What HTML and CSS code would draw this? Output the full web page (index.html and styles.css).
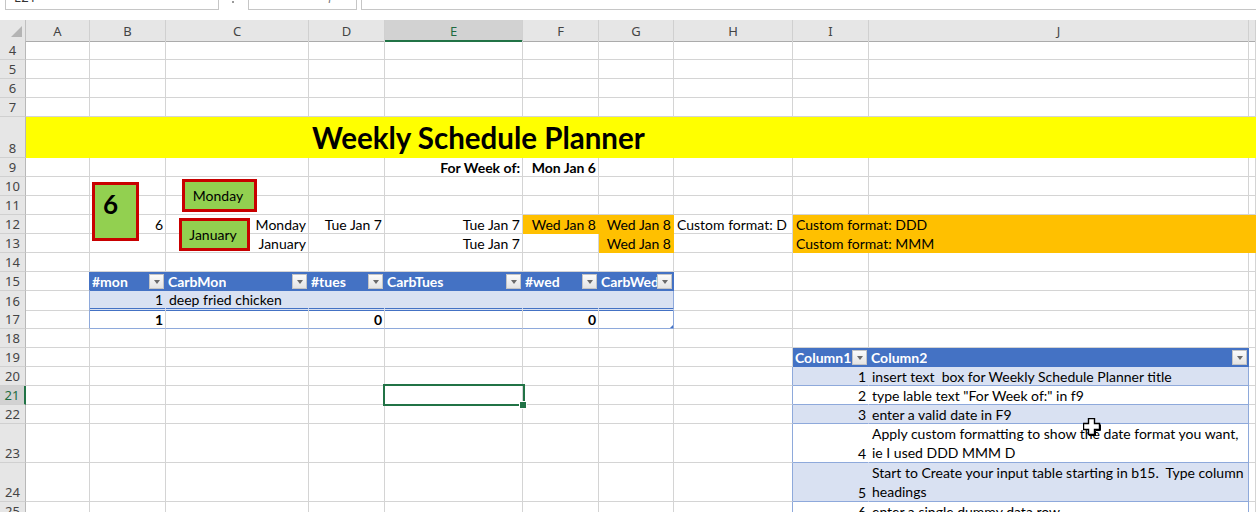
FILE: index.html
```html
<!DOCTYPE html>
<html>
<head>
<meta charset="utf-8">
<title>Weekly Schedule Planner</title>
<link rel="stylesheet" href="styles.css">
</head>
<body>
<div class="page">
  <div class="topbar">
    <div class="namebox">E21</div>
    <div class="dots"></div>
    <div class="fbtns"><span>✕</span><span>✓</span><span class="fx">fx</span></div>
    <div class="finput"></div>
  </div>

  <div class="sheet">
    <div class="row hdr">
      <div class="corner"><svg width="26" height="21" viewBox="0 0 26 21"><polygon points="22,6 22,17 11,17" fill="#b4b4b4"/></svg></div>
      <div class="ch">A</div><div class="ch">B</div><div class="ch">C</div><div class="ch">D</div><div class="ch chsel">E</div><div class="ch">F</div><div class="ch">G</div><div class="ch">H</div><div class="ch">I</div><div class="ch">J</div><div class="ch"></div>
    </div>

    <div class="row"><div class="rh">4</div><div class="c"></div><div class="c"></div><div class="c"></div><div class="c"></div><div class="c"></div><div class="c"></div><div class="c"></div><div class="c"></div><div class="c"></div><div class="c"></div><div class="c"></div></div>
    <div class="row"><div class="rh">5</div><div class="c"></div><div class="c"></div><div class="c"></div><div class="c"></div><div class="c"></div><div class="c"></div><div class="c"></div><div class="c"></div><div class="c"></div><div class="c"></div><div class="c"></div></div>
    <div class="row"><div class="rh">6</div><div class="c"></div><div class="c"></div><div class="c"></div><div class="c"></div><div class="c"></div><div class="c"></div><div class="c"></div><div class="c"></div><div class="c"></div><div class="c"></div><div class="c"></div></div>
    <div class="row"><div class="rh">7</div><div class="c"></div><div class="c"></div><div class="c"></div><div class="c"></div><div class="c"></div><div class="c"></div><div class="c"></div><div class="c"></div><div class="c"></div><div class="c"></div><div class="c"></div></div>

    <div class="row r8"><div class="rh">8</div><div class="c title">Weekly Schedule Planner</div></div>

    <div class="row"><div class="rh">9</div><div class="c"></div><div class="c"></div><div class="c"></div><div class="c"></div><div class="c r b">For Week of:</div><div class="c r b">Mon Jan 6</div><div class="c"></div><div class="c"></div><div class="c"></div><div class="c"></div><div class="c"></div></div>
    <div class="row"><div class="rh">10</div><div class="c"></div><div class="c"></div><div class="c"></div><div class="c"></div><div class="c"></div><div class="c"></div><div class="c"></div><div class="c"></div><div class="c"></div><div class="c"></div><div class="c"></div></div>
    <div class="row"><div class="rh">11</div><div class="c"></div><div class="c"></div><div class="c"></div><div class="c"></div><div class="c"></div><div class="c"></div><div class="c"></div><div class="c"></div><div class="c"></div><div class="c"></div><div class="c"></div></div>

    <div class="row"><div class="rh">12</div><div class="c"></div><div class="c r">6</div><div class="c r">Monday</div><div class="c r">Tue Jan 7</div><div class="c r">Tue Jan 7</div><div class="c r o">Wed Jan 8</div><div class="c r o">Wed Jan 8</div><div class="c">Custom format: D</div><div class="c o span2">Custom format: DDD</div><div class="c o"></div></div>
    <div class="row"><div class="rh">13</div><div class="c"></div><div class="c"></div><div class="c r">January</div><div class="c"></div><div class="c r">Tue Jan 7</div><div class="c"></div><div class="c r o">Wed Jan 8</div><div class="c"></div><div class="c o span2">Custom format: MMM</div><div class="c o"></div></div>
    <div class="row"><div class="rh">14</div><div class="c"></div><div class="c"></div><div class="c"></div><div class="c"></div><div class="c"></div><div class="c"></div><div class="c"></div><div class="c"></div><div class="c"></div><div class="c"></div><div class="c"></div></div>

    <div class="row"><div class="rh">15</div><div class="c tleft-h"></div>
      <div class="c th"><span class="tt">#mon</span><span class="dd"></span></div>
      <div class="c th"><span class="tt">CarbMon</span><span class="dd"></span></div>
      <div class="c th"><span class="tt">#tues</span><span class="dd"></span></div>
      <div class="c th"><span class="tt">CarbTues</span><span class="dd"></span></div>
      <div class="c th"><span class="tt">#wed</span><span class="dd"></span></div>
      <div class="c th"><span class="tt">CarbWed</span><span class="dd"></span></div>
      <div class="c"></div><div class="c"></div><div class="c"></div><div class="c"></div></div>

    <div class="row"><div class="rh">16</div><div class="c tleft"></div><div class="c band r">1</div><div class="c band">deep fried chicken</div><div class="c band"></div><div class="c band"></div><div class="c band"></div><div class="c band tlast"></div><div class="c"></div><div class="c"></div><div class="c"></div><div class="c"></div></div>

    <div class="row"><div class="rh">17</div><div class="c tleft"></div><div class="c tot r b">1</div><div class="c tot"></div><div class="c tot r b">0</div><div class="c tot"></div><div class="c tot r b">0</div><div class="c tot tlast grip"><span class="gripmark"></span></div><div class="c"></div><div class="c"></div><div class="c"></div><div class="c"></div></div>

    <div class="row"><div class="rh">18</div><div class="c"></div><div class="c"></div><div class="c"></div><div class="c"></div><div class="c"></div><div class="c"></div><div class="c"></div><div class="c"></div><div class="c"></div><div class="c"></div><div class="c"></div></div>

    <div class="row"><div class="rh">19</div><div class="c"></div><div class="c"></div><div class="c"></div><div class="c"></div><div class="c"></div><div class="c"></div><div class="c"></div><div class="c"></div>
      <div class="c th"><span class="tt">Column1</span><span class="dd"></span></div>
      <div class="c th"><span class="tt">Column2</span><span class="dd"></span></div>
      <div class="c"></div></div>

    <div class="row"><div class="rh">20</div><div class="c"></div><div class="c"></div><div class="c"></div><div class="c"></div><div class="c"></div><div class="c"></div><div class="c"></div><div class="c tleft"></div><div class="c n1 band r">1</div><div class="c n2 band pre">insert text  box for Weekly Schedule Planner title</div><div class="c"></div></div>
    <div class="row"><div class="rh rhsel">21</div><div class="c"></div><div class="c"></div><div class="c"></div><div class="c"></div><div class="c sel"><span class="selbox"></span><span class="handle"></span></div><div class="c"></div><div class="c"></div><div class="c tleft"></div><div class="c n1 r">2</div><div class="c n2">type lable text "For Week of:" in f9</div><div class="c"></div></div>
    <div class="row"><div class="rh">22</div><div class="c"></div><div class="c"></div><div class="c"></div><div class="c"></div><div class="c"></div><div class="c"></div><div class="c"></div><div class="c tleft"></div><div class="c n1 band r">3</div><div class="c n2 band">enter a valid date in F9</div><div class="c"></div></div>
    <div class="row h39"><div class="rh">23</div><div class="c"></div><div class="c"></div><div class="c"></div><div class="c"></div><div class="c"></div><div class="c"></div><div class="c"></div><div class="c tleft"></div><div class="c n1 r">4</div><div class="c n2 wrap"><span>Apply custom formatting to show the date format you want,<br>ie I used DDD MMM D</span></div><div class="c"></div></div>
    <div class="row h39"><div class="rh">24</div><div class="c"></div><div class="c"></div><div class="c"></div><div class="c"></div><div class="c"></div><div class="c"></div><div class="c"></div><div class="c tleft"></div><div class="c n1 band r">5</div><div class="c n2 band wrap"><span class="pre">Start to Create your input table starting in b15.  Type column<br>headings</span></div><div class="c"></div></div>
    <div class="row"><div class="rh">25</div><div class="c"></div><div class="c"></div><div class="c"></div><div class="c"></div><div class="c"></div><div class="c"></div><div class="c"></div><div class="c tleft"></div><div class="c n1 r">6</div><div class="c n2">enter a single dummy data row</div><div class="c"></div></div>
  </div>

  <div class="tbox tb6">6</div>
  <div class="tbox tbmon">Monday</div>
  <div class="tbox tbjan">January</div>

  <svg class="cursor" width="18" height="18" viewBox="0 0 18 18"><polygon points="5.5,0.5 11.5,0.5 11.5,5.5 16.5,5.5 16.5,11.5 11.5,11.5 11.5,16.5 5.5,16.5 5.5,11.5 0.5,11.5 0.5,5.5 5.5,5.5" fill="#fff" stroke="#000" stroke-width="1.4"/><polyline points="12.5,12.5 12.5,17.5 6,17.5" fill="none" stroke="#000" stroke-width="1"/><polyline points="12.5,12.5 17.5,12.5 17.5,6.5" fill="none" stroke="#000" stroke-width="1"/></svg>
</div>
</body>
</html>
```

FILE: styles.css
```css
body {
  margin: 0;
  background: #fff;
  font-family: Lato, "Liberation Sans", sans-serif;
}

.page {
  position: relative;
  width: 1256px;
  height: 512px;
  overflow: hidden;
  background: #fff;
}

/* formula bar strip (cut at the top) */
.topbar {
  height: 20px;
  display: flex;
  align-items: flex-start;
  overflow: hidden;
  background: #fff;
}
.namebox {
  box-sizing: border-box;
  width: 214px;
  height: 24px;
  margin: -14px 0 0 5px;
  padding: 1px 8px 0;
  border: 1px solid #c6c6c6;
  font: 13px "Noto Sans", sans-serif;
  color: #333;
  line-height: 18px;
}
.dots {
  width: 2px;
  height: 2px;
  margin: 1px 0 0 13px;
  background: #9a9a9a;
}
.fbtns {
  box-sizing: border-box;
  width: 109px;
  height: 24px;
  margin: -14px 0 0 14px;
  border: 1px solid #c6c6c6;
  display: flex;
  align-items: flex-start;
  gap: 19px;
  padding: 0 0 0 13px;
  font: 14px "DejaVu Sans", sans-serif;
  color: #b0b0b0;
  line-height: 18px;
}
.fbtns .fx {
  margin-left: 5px;
  font: italic 13px "Liberation Serif", serif;
  color: #777;
  line-height: 18px;
}
.finput {
  flex: 1;
  height: 24px;
  margin: -14px 0 0 4px;
  box-sizing: border-box;
  border: 1px solid #c6c6c6;
  border-right: none;
}

/* grid */
.row {
  display: grid;
  grid-template-columns: 26px 64px 76px 143px 76px 138px 76px 75px 119px 76px 380px 7px;
  height: 19px;
}
.row.hdr { height: 21px; }
.row.r8 { height: 41px; }
.row.h39 { height: 39px; }

.corner {
  background: #e6e6e6;
  border-right: 1px solid #c0c0c0;
  border-bottom: 1px solid #ababab;
  box-sizing: border-box;
}
.corner svg { display: block; }

.ch {
  box-sizing: border-box;
  background: #e6e6e6;
  border-right: 1px solid #d0d0d0;
  border-bottom: 1px solid #ababab;
  display: flex;
  align-items: center;
  justify-content: center;
  font: 13px "Noto Sans", sans-serif;
  color: #444;
  padding-top: 1px;
}
.ch.chsel {
  background: #d2d2d2;
  border-bottom: 2px solid #217346;
  color: #1e6b41;
  padding-top: 2px;
}

.rh {
  box-sizing: border-box;
  background: #e6e6e6;
  border-right: 1px solid #b8b8b8;
  border-bottom: 1px solid #d0d0d0;
  display: flex;
  align-items: flex-end;
  justify-content: center;
  font: 13px "Noto Sans", sans-serif;
  color: #444;
  line-height: 17px;
}
.rh.rhsel {
  background: #d2d2d2;
  border-right: 2px solid #217346;
  color: #1e6b41;
}

.c {
  box-sizing: border-box;
  min-width: 0;
  border-right: 1px solid #d4d4d4;
  border-bottom: 1px solid #d4d4d4;
  display: flex;
  align-items: flex-end;
  padding: 0 2px 0 3px;
  white-space: nowrap;
  font-size: 14px;
  line-height: 17px;
  color: #000;
}
.r { justify-content: flex-end; }
.b { font-weight: bold; }
.pre { white-space: pre; }

.title {
  grid-column: 2 / -1;
  background: #ffff00;
  border-right-color: #ffff00;
  border-bottom-color: #ffff00;
  align-items: flex-start;
  padding: 3px 0 0 286px;
  font-size: 29.5px;
  font-weight: bold;
  line-height: 35px;
}

.o {
  background: #ffc000;
  border-right-color: #ffc000;
  border-bottom-color: #ffc000;
}
.span2 { grid-column: span 2; }

/* tables */
.th {
  background: #4472c4;
  border-right-color: #4472c4;
  border-bottom-color: #4472c4;
  color: #fff;
  font-weight: bold;
  align-items: center;
  padding: 0 1px 0 2px;
}
.tt {
  overflow: hidden;
  min-width: 0;
  flex: 0 1 auto;
  padding-top: 1px;
}
.dd {
  flex: none;
  margin-left: auto;
  box-sizing: border-box;
  width: 15px;
  height: 15px;
  background: linear-gradient(#fbfbfb, #e4e4e4);
  border: 1px solid #c4c4c4;
  display: flex;
  align-items: center;
  justify-content: center;
}
.dd::after {
  content: "";
  border-left: 3px solid transparent;
  border-right: 3px solid transparent;
  border-top: 4px solid #6a6a6a;
  margin-top: 1px;
}

.tleft-h { border-right-color: #4472c4; }
.tleft { border-right-color: #8ea9db; }

.band {
  background: #d9e1f2;
  border-right-color: #d9e1f2;
}
.row .band:not(.n1):not(.n2) {
  border-bottom: 3px double #4472c4;
}
.tlast { border-right-color: #8ea9db; }
.tot {
  border-bottom-color: #8ea9db;
}
.grip { position: relative; }
.gripmark {
  position: absolute;
  right: 0;
  bottom: 0;
  width: 0;
  height: 0;
  border-left: 3px solid transparent;
  border-bottom: 3px solid #4472c4;
}

.n1 {
  border-right-color: #fff;
  border-bottom-color: #8ea9db;
}
.n1.band { border-right-color: #d9e1f2; }
.n2 {
  border-right-color: #8ea9db;
  border-bottom-color: #8ea9db;
}
.wrap { line-height: 19px; }
.wrap span { display: block; }

/* selection */
.sel { position: relative; }
.selbox {
  position: absolute;
  left: -2px;
  top: -2px;
  right: -3px;
  bottom: -2px;
  border: 2px solid #217346;
}
.handle {
  position: absolute;
  right: -5px;
  bottom: -5px;
  width: 6px;
  height: 6px;
  background: #217346;
  border: 1px solid #fff;
  box-sizing: content-box;
}

/* floating text boxes */
.tbox {
  position: absolute;
  box-sizing: border-box;
  background: #92d050;
  border: 3px solid #c80000;
  display: flex;
  align-items: center;
  justify-content: center;
  font-size: 14px;
  color: #000;
}
.tb6 {
  left: 92px;
  top: 182px;
  width: 47px;
  height: 59px;
  align-items: flex-start;
  justify-content: flex-start;
  padding: 4px 0 0 8px;
  font-size: 26px;
  font-weight: bold;
  line-height: 30px;
}
.tbmon {
  left: 182px;
  top: 179px;
  width: 75px;
  height: 33px;
  padding-right: 3px;
}
.tbjan {
  left: 179px;
  top: 218px;
  width: 71px;
  height: 33px;
  padding-right: 3px;
}

.cursor {
  position: absolute;
  left: 1083px;
  top: 418px;
}
```
